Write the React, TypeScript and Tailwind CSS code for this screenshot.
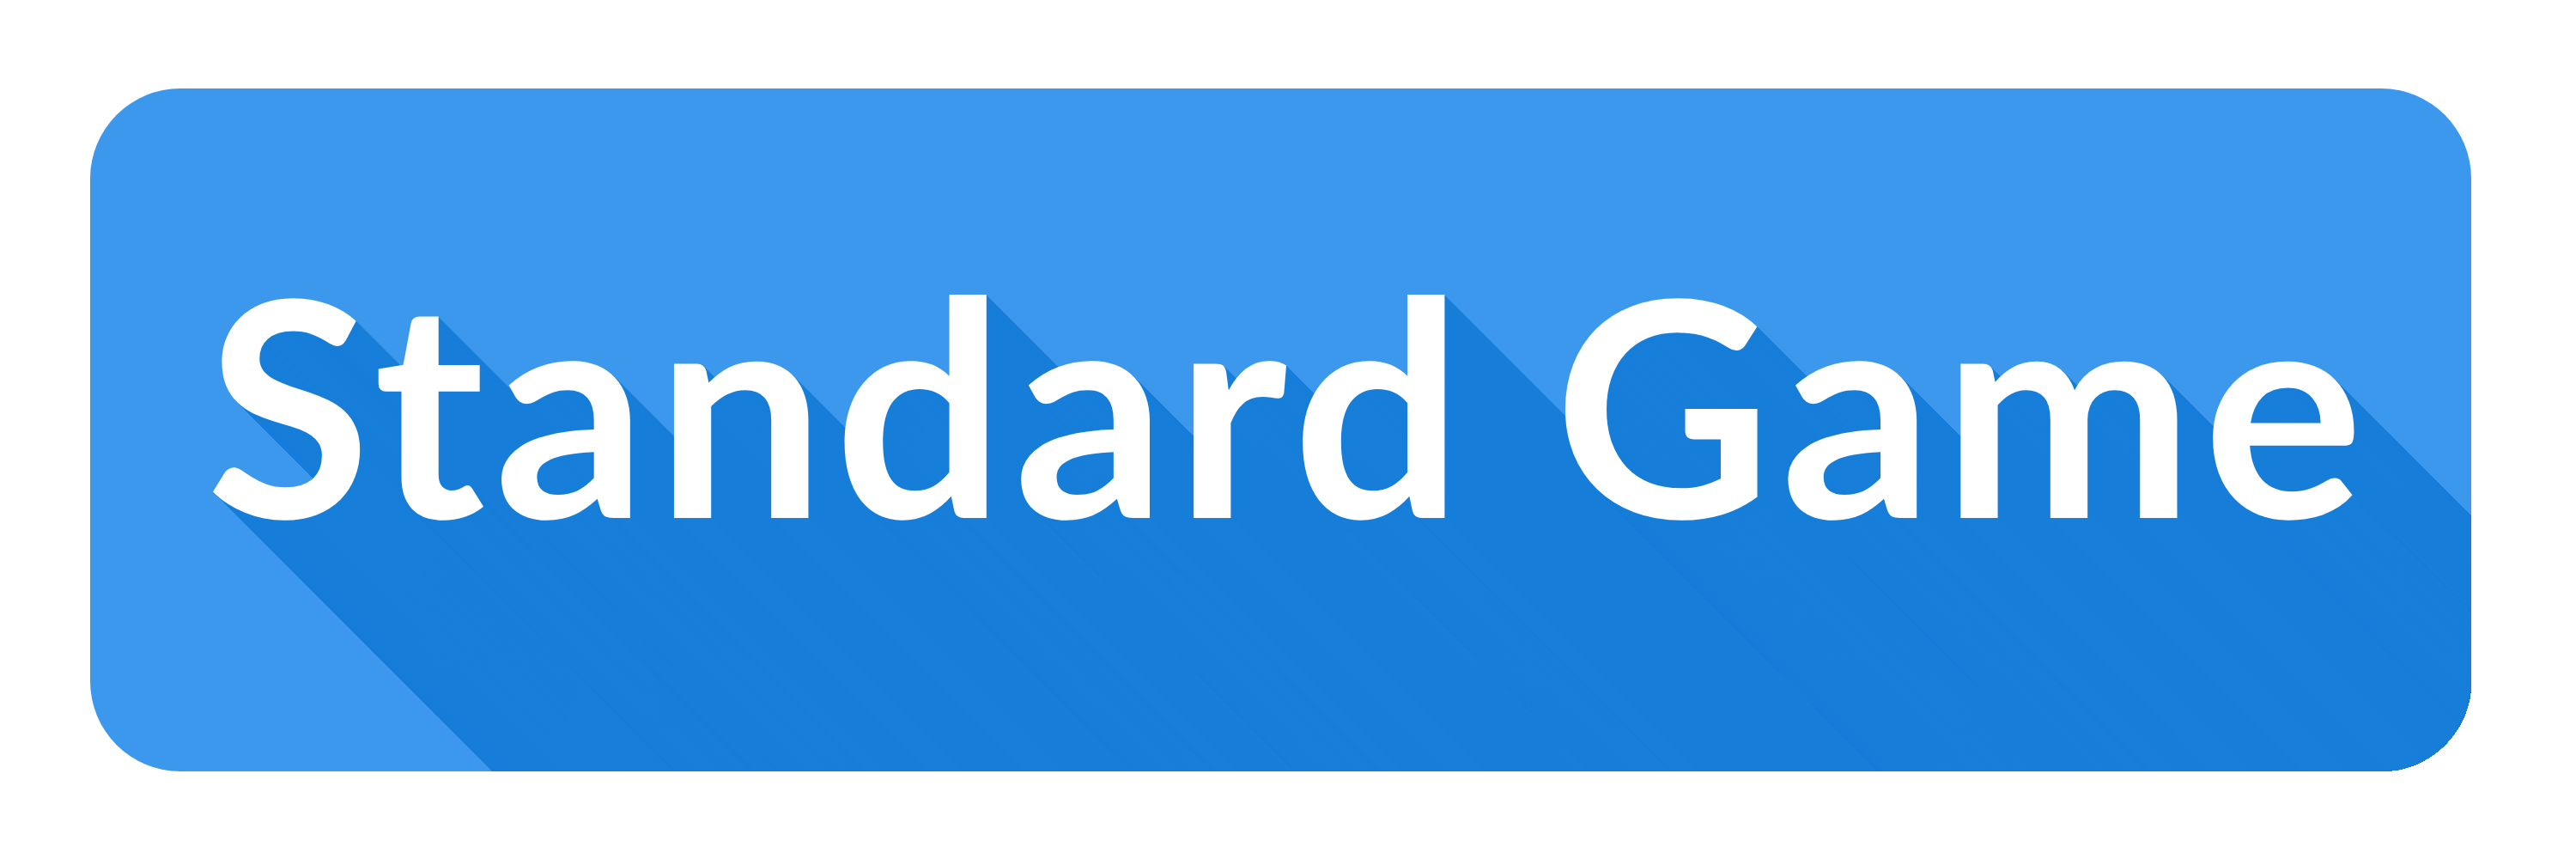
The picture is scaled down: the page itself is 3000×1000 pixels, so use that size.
const SHADOW_COLOR = "#177ed9";

// long 45° shadow: stack of 1px offsets, built once
const longShadow = Array.from({ length: 640 }, (_, i) => {
  const d = i + 1;
  return `${d}px ${d}px 0 ${SHADOW_COLOR}`;
}).join(", ");

export default function App() {
  return (
    <div className="flex h-[1000px] w-[3000px] bg-white pl-[105px] pt-[103px]">
      <div className="flex h-[795px] w-[2773px] items-center justify-center overflow-hidden rounded-[105px] bg-[#3c98ed] pb-[66px] pl-[20px]">
        <h1
          className="whitespace-nowrap font-['Lato',sans-serif] text-[350px] font-bold leading-none tracking-[0.03em] text-white"
          style={{ textShadow: longShadow }}
        >
          Standard Game
        </h1>
      </div>
    </div>
  );
}
